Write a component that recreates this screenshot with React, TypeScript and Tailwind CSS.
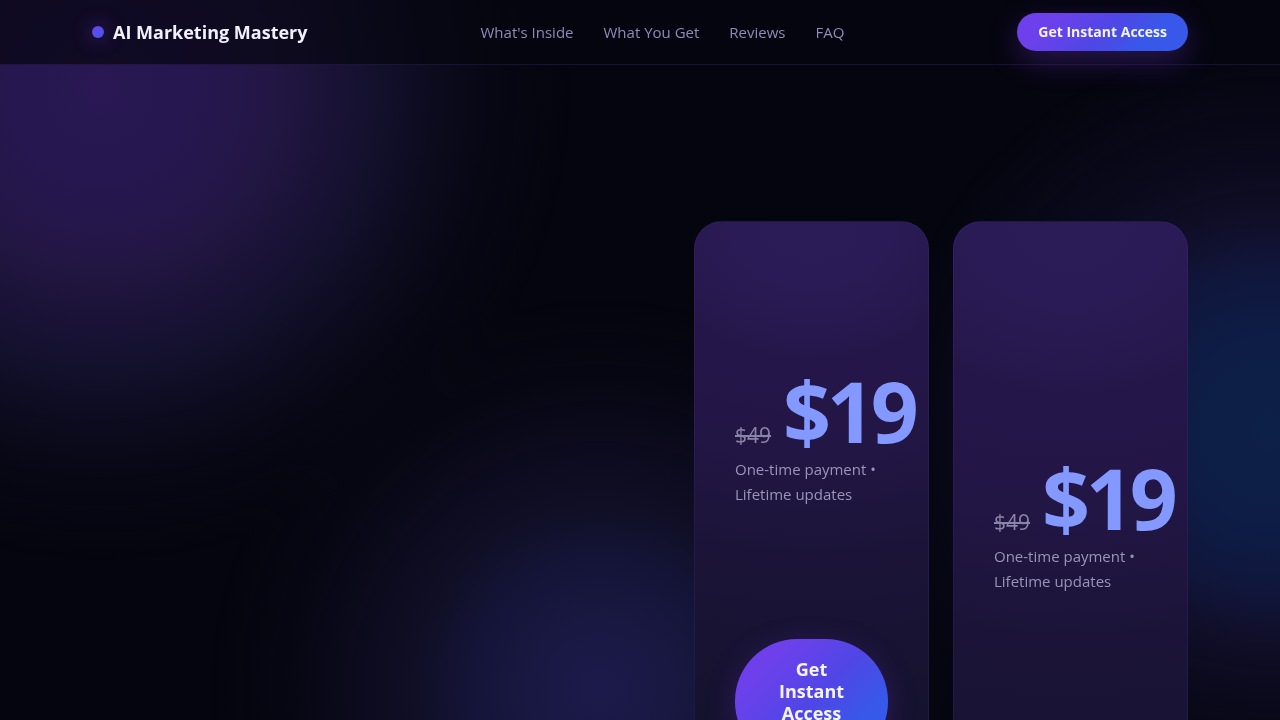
import { clsx } from "clsx";

const NAV_LINKS = [
  { label: "What's Inside", href: "#inside" },
  { label: "What You Get", href: "#get" },
  { label: "Reviews", href: "#reviews" },
  { label: "FAQ", href: "#faq" },
];

function Header() {
  return (
    <header className="sticky top-0 z-20 border-b border-[#7c5cff]/15 bg-[#05050f]/70">
      <div className="mx-auto flex h-16 max-w-[1160px] items-center justify-between px-8">
        <a href="#top" className="flex items-center gap-[9px] text-lg font-bold text-[#f2f0ff]">
          <span className="h-3 w-3 rounded-full bg-linear-135 from-[#7040ee] to-[#3858ea] shadow-[0_0_18px_4px_rgba(124,58,237,0.25)]" />
          AI Marketing Mastery
        </a>
        <nav className="flex items-center gap-[30px] text-[15px] text-[#8f8ab8]">
          {NAV_LINKS.map((link) => (
            <a key={link.href} href={link.href} className="hover:text-white">
              {link.label}
            </a>
          ))}
        </nav>
        <button
          type="button"
          className="h-[38px] cursor-pointer rounded-full bg-linear-135/srgb from-[#6e40ec] from-20% via-[#5046e5] to-[#3858ea] to-75% px-[21px] text-sm font-bold text-[#f5f3ff] shadow-[0_10px_30px_rgba(124,58,237,0.3)]"
        >
          Get Instant Access
        </button>
      </div>
    </header>
  );
}

function PriceCard({ className, showButton = false }: { className?: string; showButton?: boolean }) {
  return (
    <article
      className={clsx(
        "h-full min-h-[680px] rounded-[28px] border border-[#7c5cff]/10 px-10 pb-10",
        className,
      )}
    >
      <div className="flex items-baseline gap-3">
        <del className="text-[21px] text-[#8a84a6]">$49</del>
        <strong className="text-[84px] leading-[84px] font-bold tracking-tighter text-[#8499ff]">$19</strong>
      </div>
      <p className="mt-1 text-[15px] leading-[25px] text-[#9a94b8]">One-time payment • Lifetime updates</p>
      {showButton && (
        <button
          type="button"
          className="mt-[132px] w-full cursor-pointer rounded-[62px] bg-linear-135/srgb from-[#6e40ec] from-20% via-[#5046e5] to-[#3858ea] to-75% px-9 pt-[19px] pb-10 text-lg leading-[22px] font-bold text-[#f5f3ff] shadow-[0_8px_30px_rgba(124,58,237,0.25)]"
        >
          Get Instant Access
        </button>
      )}
    </article>
  );
}

export default function App() {
  return (
    <div
      id="top"
      className="relative isolate min-h-screen bg-[#05050f] font-['Open_Sans',sans-serif] text-white"
    >
      {/* Ambient glows */}
      <div className="pointer-events-none fixed inset-0 -z-10 bg-[radial-gradient(circle_at_100px_90px,#291853_0px,#261750_90px,rgba(36,23,71,0.97)_170px,rgba(28,20,58,0.93)_230px,rgba(21,18,48,0.9)_280px,rgba(14,13,34,0.8)_335px,rgba(9,9,24,0.6)_390px,rgba(5,5,15,0)_470px),radial-gradient(circle_at_1270px_430px,#0d2048_0px,#0d1d46_90px,#10163c_160px,rgba(18,15,42,0.9)_215px,rgba(14,12,34,0.7)_265px,rgba(5,5,15,0)_390px),radial-gradient(circle_at_600px_690px,#1c1a4a_0px,#191842_70px,#141438_130px,rgba(17,15,38,0.95)_190px,rgba(14,12,32,0.8)_250px,rgba(9,9,24,0.5)_310px,rgba(5,5,15,0)_390px)]" />
      <Header />
      <main className="mx-auto grid max-w-[1160px] grid-cols-[1fr_235px_235px] gap-6 px-8 pt-39 pb-24">
        <div />
        <PriceCard
          className="bg-[radial-gradient(800px_640px_at_50%_0%,#2b1c58_0%,#2a1b56_10%,#251649_22%,#221645_36%,#1b1438_52%,#15122e_78%)] pt-[147px]"
          showButton
        />
        <PriceCard className="bg-[radial-gradient(1000px_800px_at_50%_0%,#2b1c58_0%,#2a1b56_10%,#251649_22%,#221645_36%,#1b1438_52%,#15122e_78%)] pt-[234px]" />
      </main>
    </div>
  );
}
